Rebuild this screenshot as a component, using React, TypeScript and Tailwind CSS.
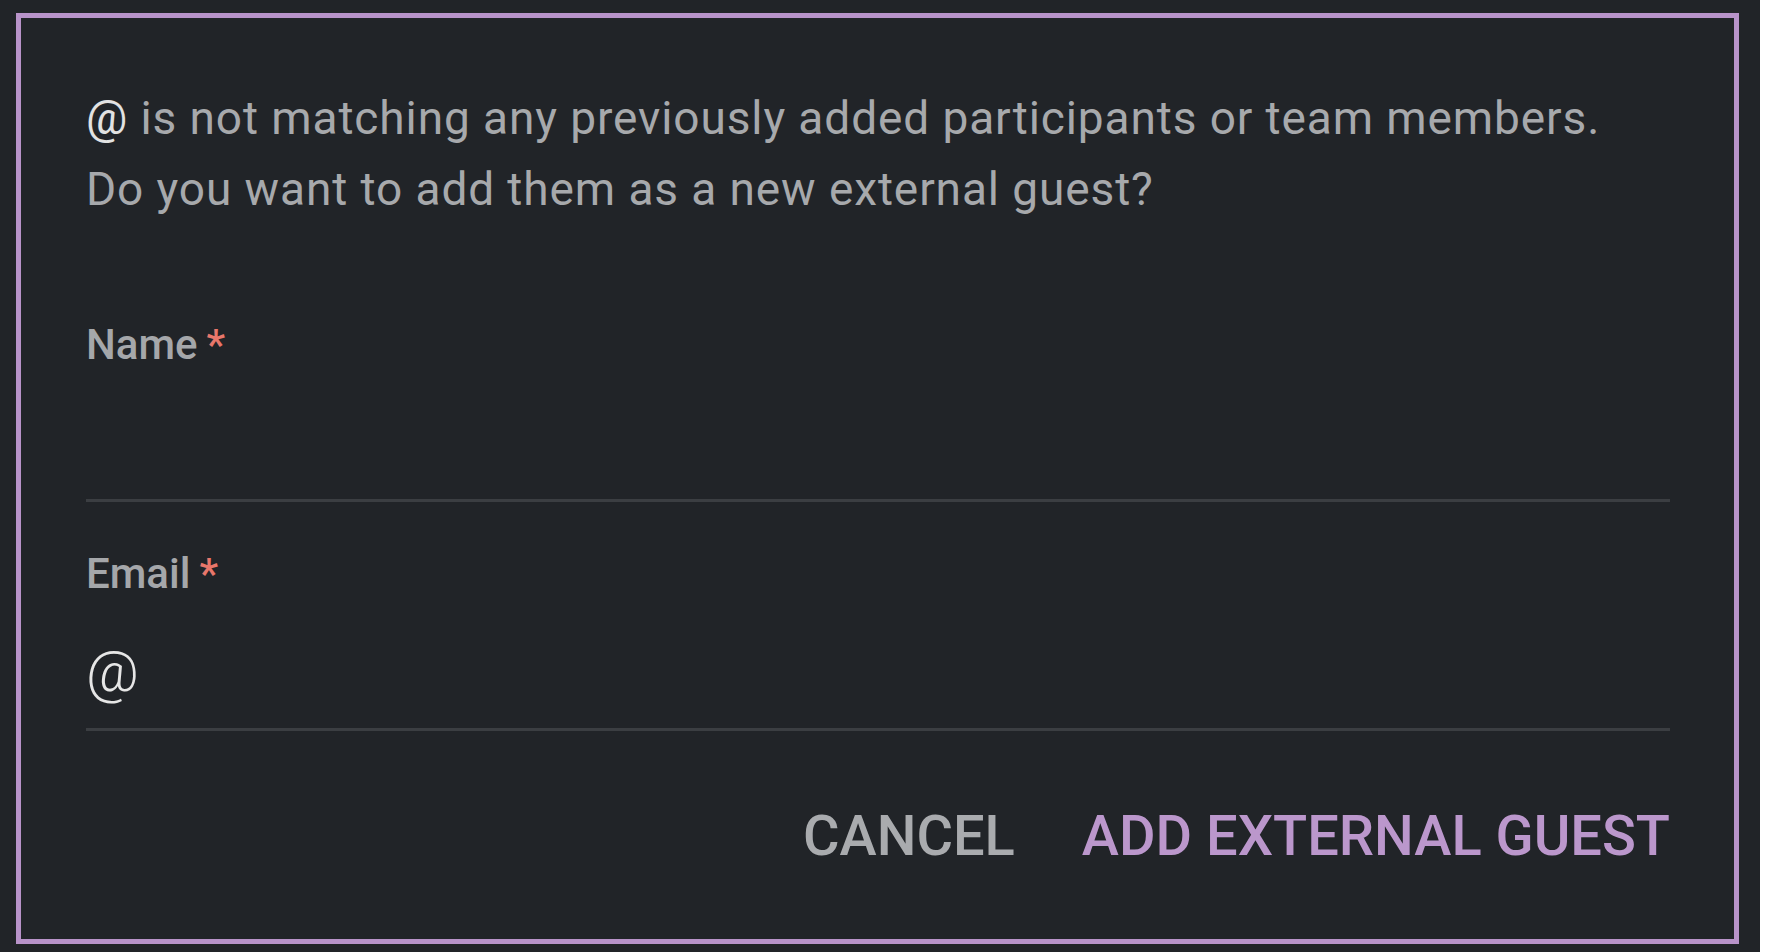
import React from "react"

const font = { fontFamily: "Roboto, 'Noto Sans', sans-serif" }

function Field({ label, value }: { label: string; value?: string }) {
    return (
        <div className="flex flex-col">
            <div className="flex items-start h-[40px] text-[42px] leading-[40px] font-medium text-[#a5a7aa]">
                <span>{label}</span>
                <span className="ml-[9px] text-[#e8776b]">*</span>
            </div>
            <div className="flex items-end h-[137px] border-b-[3px] border-[#3b3e42] pb-[28px]">
                <span className="text-[58px] leading-[58px] font-light text-[#e6e6e6]">{value}</span>
            </div>
        </div>
    )
}

export default function App() {
    return (
        <div className="flex w-full h-[952px] bg-white" style={font}>
            <div className="w-[1760px] h-full bg-[#212428] pt-[13px] pl-[16px]">
                <div className="flex flex-col w-[1723px] h-[931px] border-[5px] border-[#b893c9] pl-[65px] pr-[64px] pt-[65px]">
                    <p className="text-[46px] leading-[71px] text-[#a7a9ac] tracking-[0.9px]">
                        <span className="text-[#e2e2e2]">@</span> is not matching any previously added participants or team members.
                        <br />
                        Do you want to add them as a new external guest?
                    </p>

                    <div className="flex flex-col gap-[52px] mt-[100px]">
                        <Field label="Name" />
                        <Field label="Email" value="@" />
                    </div>

                    <div className="flex justify-end items-center gap-[67px] mt-[77px] text-[56px] leading-[56px] font-medium">
                        <button className="text-[#a9abae]">CANCEL</button>
                        <button className="text-[#bb97cc]">ADD EXTERNAL GUEST</button>
                    </div>
                </div>
            </div>
        </div>
    )
}
